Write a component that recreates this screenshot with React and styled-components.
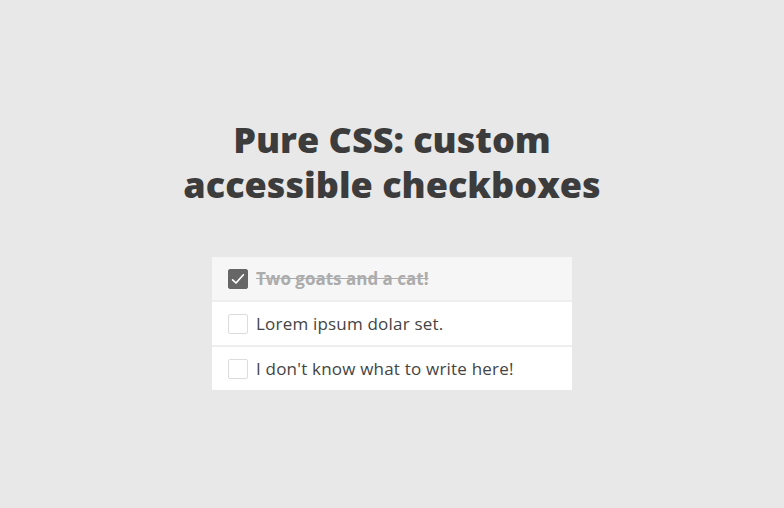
import React, { useState } from "react";
import styled, { createGlobalStyle } from "styled-components";

const Global = createGlobalStyle`
  html, body { margin: 0; padding: 0; background: #e8e8e8; }
  body { font-family: "Open Sans", Lato, sans-serif; }
`;

const Page = styled.main`
  display: flex;
  flex-direction: column;
  align-items: center;
  padding-top: 117px;
`;

const Title = styled.h1`
  margin: 0;
  font-family: "Open Sans", sans-serif;
  font-weight: 800;
  font-size: 36px;
  line-height: 45px;
  color: #3c3c3c;
  text-align: center;
`;

const List = styled.ul`
  list-style: none;
  margin: 50px 0 0;
  padding: 0;
  width: 360px;
  display: flex;
  flex-direction: column;
  gap: 2px;
  background: #eeeeee;
`;

const Row = styled.li`
  height: 43px;
  background: ${(p) => (p.$checked ? "#f6f6f6" : "#ffffff")};
`;

const Label = styled.label`
  display: flex;
  align-items: center;
  gap: 8px;
  height: 100%;
  padding: 0 16px;
  cursor: pointer;
`;

const HiddenInput = styled.input`
  position: absolute;
  opacity: 0;
  width: 1px;
  height: 1px;
  margin: 0;
`;

const Box = styled.span`
  flex: none;
  width: 20px;
  height: 20px;
  box-sizing: border-box;
  border-radius: 2px;
  border: 1px solid ${(p) => (p.$checked ? "#666" : "#dcdcdc")};
  background: ${(p) => (p.$checked ? "#666" : "#fff")};
  display: flex;
  align-items: center;
  justify-content: center;
`;

const Text = styled.span`
  font-family: "Open Sans", sans-serif;
  font-size: 17px;
  letter-spacing: ${(p) => (p.$checked ? "0" : "0.2px")};
  color: ${(p) => (p.$checked ? "#acacac" : "#444")};
  font-weight: ${(p) => (p.$checked ? 700 : 400)};
  text-decoration: ${(p) => (p.$checked ? "line-through" : "none")};
`;

const items = [
  "Two goats and a cat!",
  "Lorem ipsum dolar set.",
  "I don't know what to write here!",
];

export default function App() {
  const [checked, setChecked] = useState([true, false, false]);
  const toggle = (i) =>
    setChecked((c) => c.map((v, j) => (j === i ? !v : v)));
  return (
    <Page>
      <Global />
      <Title>
        Pure CSS: custom
        <br />
        accessible checkboxes
      </Title>
      <List>
        {items.map((t, i) => (
          <Row key={t} $checked={checked[i]}>
            <Label>
              <HiddenInput
                type="checkbox"
                checked={checked[i]}
                onChange={() => toggle(i)}
              />
              <Box $checked={checked[i]}>
                {checked[i] && (
                  <svg width="18" height="18" viewBox="0 0 18 18">
                    <path
                      d="M3.6 9.8 L7 13 L14.4 4.8"
                      fill="none"
                      stroke="#fff"
                      strokeWidth="1.7"
                      strokeLinecap="round"
                      strokeLinejoin="round"
                    />
                  </svg>
                )}
              </Box>
              <Text $checked={checked[i]}>{t}</Text>
            </Label>
          </Row>
        ))}
      </List>
    </Page>
  );
}
